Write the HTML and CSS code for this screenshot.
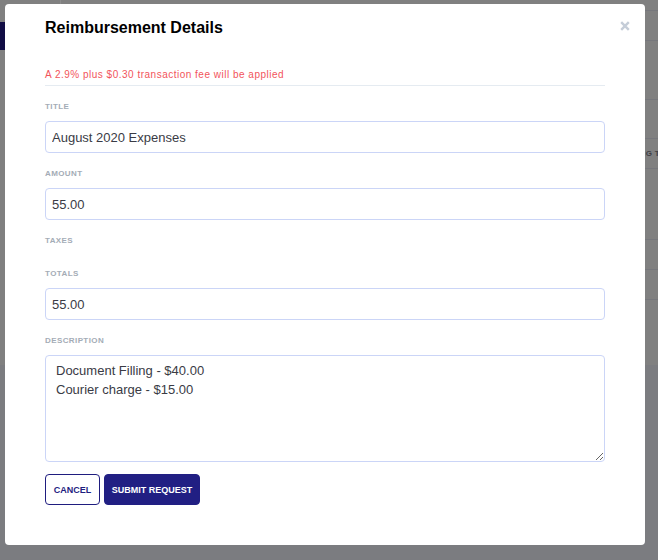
FILE: index.html
```html
<!DOCTYPE html>
<html lang="en">
<head>
<meta charset="utf-8">
<title>Reimbursement Details</title>
<link rel="stylesheet" href="styles.css">
</head>
<body>
<div class="backdrop">
  <div class="page-top">
    <aside class="sidebar">
      <div class="side-btn"></div>
    </aside>
    <main class="main">
      <div class="row r1"></div>
      <div class="row r2"></div>
      <div class="row r3"></div>
      <div class="row r4"></div>
      <div class="row r5"><span class="cell-text">PENDING TOTAL</span></div>
      <div class="row r6"></div>
      <div class="row r7"></div>
      <div class="row r8"></div>
    </main>
  </div>
  <div class="page-bottom"></div>
</div>

<div class="modal">
  <button class="close" aria-label="Close">
    <svg width="10" height="10" viewBox="0 0 10 10"><path d="M1.2 1.2 L8.8 8.8 M8.8 1.2 L1.2 8.8" stroke="#c5cdd8" stroke-width="2.4" stroke-linecap="butt"/></svg>
  </button>
  <h2 class="modal-title">Reimbursement Details</h2>
  <div class="fee-note">A 2.9% plus $0.30 transaction fee will be applied</div>

  <form class="form">
    <div class="field">
      <label class="label">Title</label>
      <input class="input" type="text" value="August 2020 Expenses">
    </div>
    <div class="field">
      <label class="label">Amount</label>
      <input class="input" type="text" value="55.00">
    </div>
    <div class="field empty">
      <label class="label">Taxes</label>
    </div>
    <div class="field">
      <label class="label">Totals</label>
      <input class="input" type="text" value="55.00">
    </div>
    <div class="field">
      <label class="label">Description</label>
      <textarea class="textarea">Document Filling - $40.00
Courier charge - $15.00</textarea>
    </div>
    <div class="actions">
      <button type="button" class="btn btn-outline">CANCEL</button>
      <button type="button" class="btn btn-primary">SUBMIT REQUEST</button>
    </div>
  </form>
</div>
</body>
</html>
```

FILE: styles.css
```css
* { box-sizing: border-box; }

html, body {
  margin: 0;
  padding: 0;
  width: 658px;
  height: 560px;
  overflow: hidden;
  font-family: "Liberation Sans", Arial, sans-serif;
}

.backdrop {
  display: flex;
  flex-direction: column;
  height: 560px;
  background: #7b7c80;
}

.page-top {
  height: 365px;
  background: #808080;
  display: flex;
}

.sidebar {
  width: 78px;
  border-right: 1px solid #8c8c8c;
  padding-top: 22px;
}

.side-btn {
  width: 60px;
  height: 28px;
  background: #110d45;
}

.main {
  flex: 1;
  display: flex;
  flex-direction: column;
}

.row { border-bottom: 1px solid #76777c; }
.r1 { height: 11px; }
.r2 { height: 30px; }
.r3 { height: 59px; }
.r4 { height: 39px; }
.r5 {
  height: 30px;
  display: flex;
  align-items: center;
  padding-left: 552px;
}
.r6 { height: 71px; }
.r7 { height: 30px; }
.r8 { height: 30px; }

.cell-text {
  font-size: 8px;
  font-weight: bold;
  color: #3e3e44;
  letter-spacing: 0.4px;
  white-space: nowrap;
}

.modal {
  position: fixed;
  left: 5px;
  top: 4px;
  width: 640px;
  height: 541px;
  background: #fff;
  border-radius: 4px;
  padding: 14px 40px 40px;
}

.close {
  position: absolute;
  top: 15px;
  right: 13px;
  width: 14px;
  height: 14px;
  padding: 2px;
  border: 0;
  background: none;
  display: flex;
  align-items: center;
  justify-content: center;
}

.modal-title {
  margin: 0;
  font-size: 16px;
  line-height: 20px;
  font-weight: bold;
  color: #000;
}

.fee-note {
  margin-top: 31px;
  font-size: 10px;
  line-height: 12px;
  letter-spacing: 0.5px;
  color: #f2545b;
  padding-bottom: 4px;
  border-bottom: 1px solid #e5ebf1;
}

.form {
  display: flex;
  flex-direction: column;
  gap: 15px;
  margin-top: 15px;
}

.field {
  display: flex;
  flex-direction: column;
  gap: 8px;
}

.field.empty { padding-bottom: 6px; gap: 0; }

.label {
  font-size: 8px;
  line-height: 12px;
  font-weight: bold;
  text-transform: uppercase;
  color: #a4acb6;
  letter-spacing: 0.4px;
}

.input,
.textarea {
  width: 560px;
  border: 1px solid #cbd5f7;
  border-radius: 4px;
  font-family: "Liberation Sans", Arial, sans-serif;
  font-size: 13px;
  color: #3a3b45;
  background: #fff;
  outline: none;
}

.input {
  height: 32px;
  padding: 0 6px;
}

.textarea {
  height: 107px;
  padding: 5px 10px;
  line-height: 19px;
  resize: vertical;
}

.actions {
  display: flex;
  gap: 4px;
  margin-top: -3px;
}

.btn {
  height: 31px;
  border-radius: 4px;
  font-family: "Liberation Sans", Arial, sans-serif;
  font-size: 9px;
  font-weight: bold;
  padding: 0;
  white-space: nowrap;
  text-align: center;
  cursor: pointer;
}

.btn-outline {
  width: 55px;
  background: #fff;
  border: 1px solid #1f1d7f;
  color: #1f1d7f;
}

.btn-primary {
  width: 96px;
  background: #211f83;
  border: 1px solid #211f83;
  color: #fff;
}
```
